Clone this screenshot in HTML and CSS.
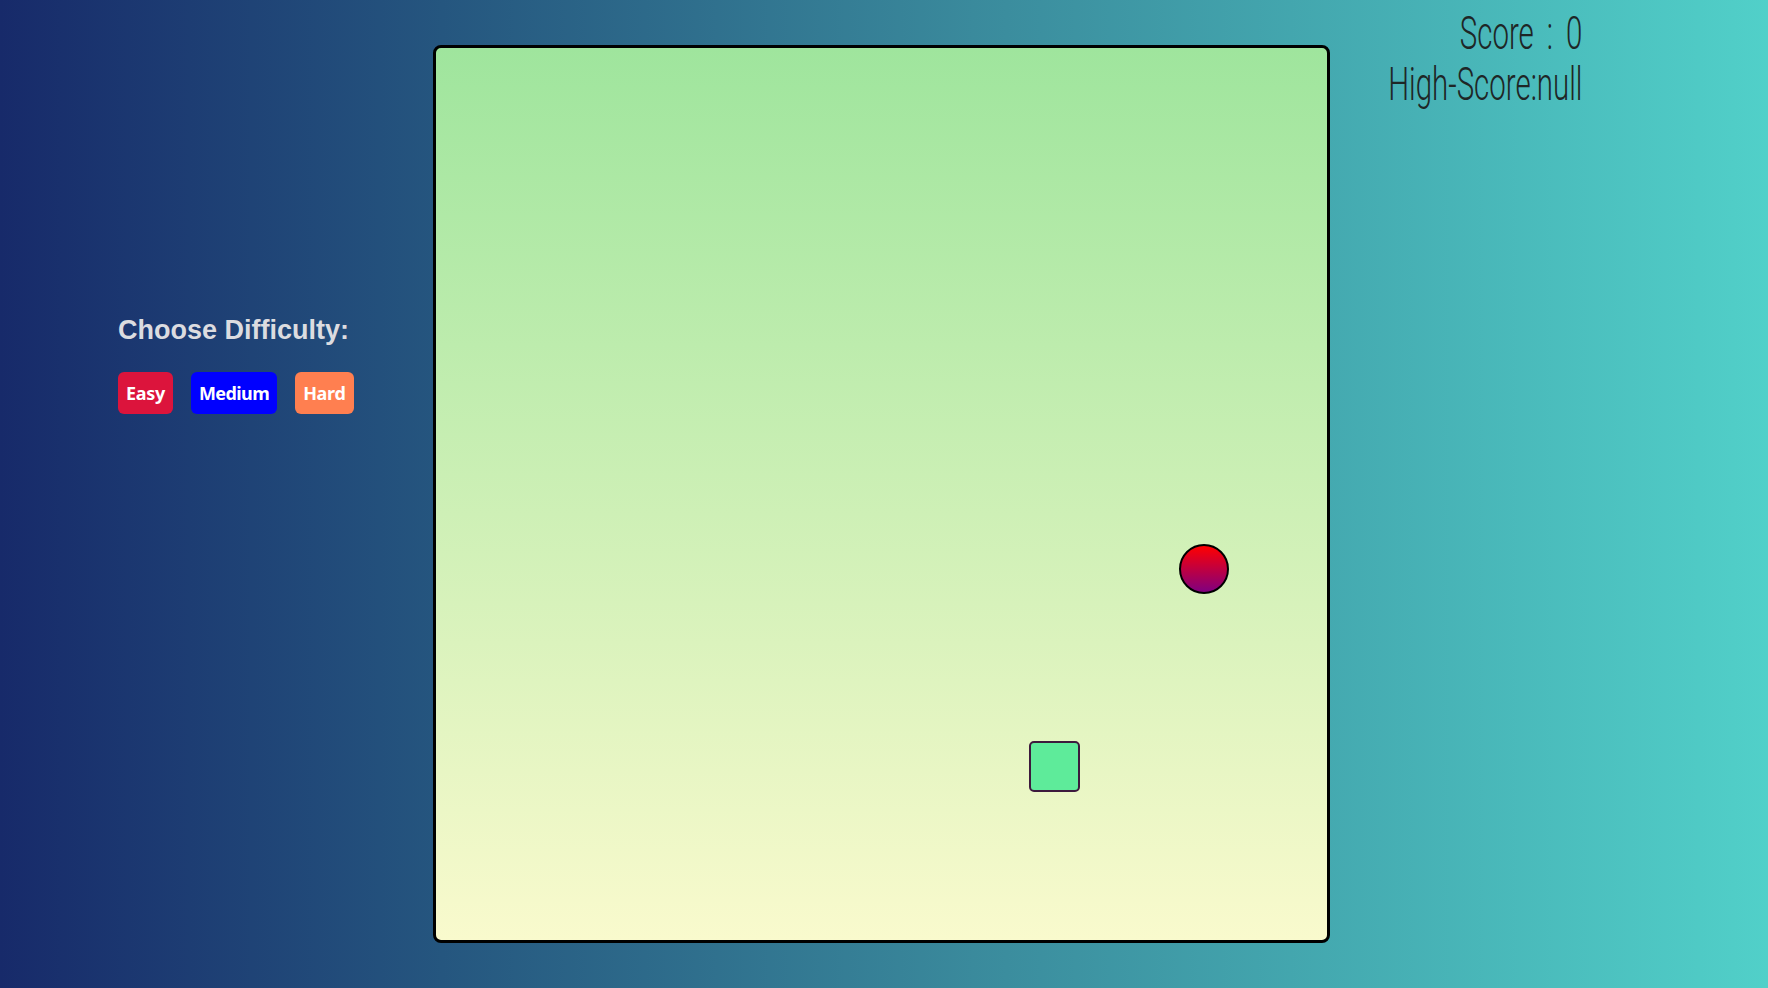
FILE: index.html
```html
<!DOCTYPE html>
<html>
<head>
<meta charset="utf-8">
<link rel="stylesheet" href="styles.css">
</head>
<body>
<div class="page">
  <div class="controls">
    <h2 class="choose">Choose Difficulty:</h2>
    <div class="buttons">
      <button class="btn easy">Easy</button>
      <button class="btn medium">Medium</button>
      <button class="btn hard">Hard</button>
    </div>
  </div>
  <div class="board">
    <div class="food"></div>
    <div class="snake"></div>
  </div>
  <div class="scores">
    <div class="score-line score-now">Score : 0</div>
    <div class="score-line">High-Score:null</div>
  </div>
</div>
</body>
</html>
```
FILE: styles.css
```css
html, body {
  margin: 0;
  padding: 0;
}
body {
  width: 100vw;
  height: 100vh;
  overflow: hidden;
  background: linear-gradient(to right, #172a6a 0%, #25567f 25%, #3a8a9c 55%, #51d0c9 100%);
}
.page {
  display: flex;
  align-items: flex-start;
  height: 100%;
  padding-left: 118px;
  box-sizing: border-box;
}
.controls {
  width: 315px;
  flex-shrink: 0;
  margin-top: 315px;
}
.choose {
  margin: 0;
  font-family: "Liberation Sans", Arial, sans-serif;
  font-weight: bold;
  font-size: 27px;
  line-height: 30px;
  color: #dcdce0;
}
.buttons {
  display: flex;
  gap: 18px;
  margin-top: 27px;
}
.btn {
  border: none;
  border-radius: 6px;
  height: 42px;
  padding: 0 8px;
  font-family: "Noto Sans", sans-serif;
  font-weight: bold;
  font-size: 18px;
  color: #ffffff;
  letter-spacing: -0.3px;
}
.easy { background: #dc143c; }
.medium { background: #0000ff; letter-spacing: -0.6px; }
.hard { background: #ff7f50; }
.board {
  position: relative;
  margin-top: 45px;
  width: 891px;
  height: 892px;
  border: 3px solid #000;
  border-radius: 8px;
  background: linear-gradient(to bottom, #9fe59d, #f9facd);
  flex-shrink: 0;
}
.food {
  position: absolute;
  left: 743px;
  top: 496px;
  width: 46px;
  height: 46px;
  border: 2px solid #000;
  border-radius: 50%;
  background: linear-gradient(to bottom, #ff0000, #800080);
}
.snake {
  position: absolute;
  left: 593px;
  top: 693px;
  width: 47px;
  height: 47px;
  border: 2px solid #3d1a3d;
  border-radius: 5px;
  background: #5eeb9a;
}
.scores {
  width: 252px;
  margin-top: 8px;
  display: flex;
  flex-direction: column;
  align-items: flex-end;
}
.score-line {
  font-family: Roboto, sans-serif;
  font-weight: 300;
  font-size: 46px;
  line-height: 51px;
  color: #1e2626;
  transform: scaleX(0.64);
  transform-origin: right center;
  white-space: nowrap;
}
.score-now {
  word-spacing: 9px;
}
```
